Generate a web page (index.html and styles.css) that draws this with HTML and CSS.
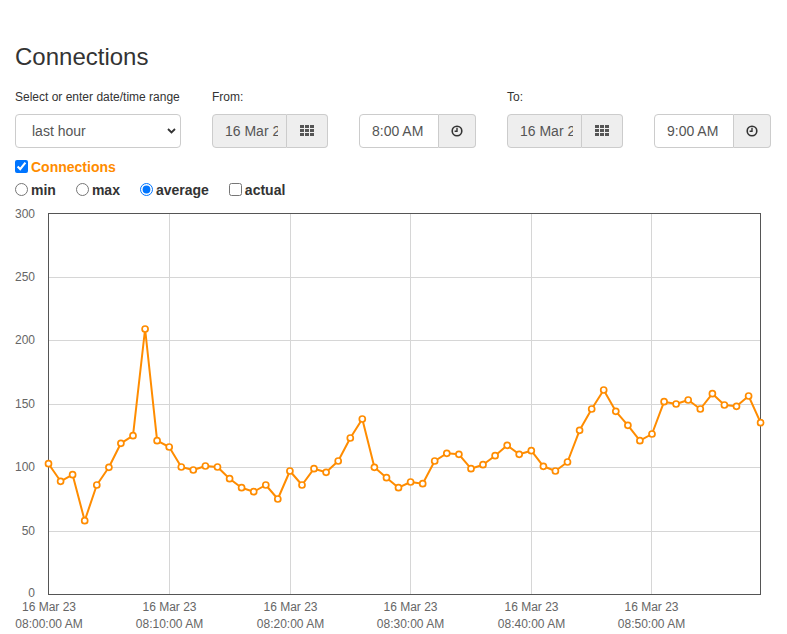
FILE: index.html
```html
<!DOCTYPE html>
<html lang="en">
<head>
<meta charset="utf-8">
<title>Connections</title>
<link rel="stylesheet" href="styles.css">
</head>
<body>
<div class="page">
  <h1 class="title">Connections</h1>
  <div class="range-row">
    <div class="field w-range">
      <label class="field-label">Select or enter date/time range</label>
      <div class="select-wrap">
        <select class="select">
          <option>last hour</option>
          <option>last day</option>
          <option>last week</option>
        </select>
        <svg class="chevron" width="9" height="6" viewBox="0 0 9 6"><path d="M1 1 L4.5 4.5 L8 1" fill="none" stroke="#333" stroke-width="1.8"/></svg>
      </div>
    </div>
    <div class="field w-date">
      <label class="field-label">From:</label>
      <div class="igroup">
        <input class="ctl ctl-date" type="text" value="16 Mar 2023" readonly>
        <span class="addon addon-date">
          <svg width="14" height="11" viewBox="0 0 14 11" fill="#555"><rect x="0" y="0" width="4" height="3"/><rect x="5" y="0" width="4" height="3"/><rect x="10" y="0" width="4" height="3"/><rect x="0" y="4" width="4" height="3"/><rect x="5" y="4" width="4" height="3"/><rect x="10" y="4" width="4" height="3"/><rect x="0" y="8" width="4" height="3"/><rect x="5" y="8" width="4" height="3"/><rect x="10" y="8" width="4" height="3"/></svg>
        </span>
      </div>
    </div>
    <div class="field w-time">
      <label class="field-label">&nbsp;</label>
      <div class="igroup">
        <input class="ctl ctl-time" type="text" value="8:00 AM">
        <span class="addon addon-time">
          <svg width="12" height="12" viewBox="0 0 12 12"><circle cx="6" cy="6" r="4.8" fill="none" stroke="#333" stroke-width="1.6"/><path d="M6 2.8 V6.3 H3.6" fill="none" stroke="#333" stroke-width="1.4"/></svg>
        </span>
      </div>
    </div>
    <div class="field w-date">
      <label class="field-label">To:</label>
      <div class="igroup">
        <input class="ctl ctl-date" type="text" value="16 Mar 2023" readonly>
        <span class="addon addon-date">
          <svg width="14" height="11" viewBox="0 0 14 11" fill="#555"><rect x="0" y="0" width="4" height="3"/><rect x="5" y="0" width="4" height="3"/><rect x="10" y="0" width="4" height="3"/><rect x="0" y="4" width="4" height="3"/><rect x="5" y="4" width="4" height="3"/><rect x="10" y="4" width="4" height="3"/><rect x="0" y="8" width="4" height="3"/><rect x="5" y="8" width="4" height="3"/><rect x="10" y="8" width="4" height="3"/></svg>
        </span>
      </div>
    </div>
    <div class="field w-time">
      <label class="field-label">&nbsp;</label>
      <div class="igroup">
        <input class="ctl ctl-time" type="text" value="9:00 AM">
        <span class="addon addon-time">
          <svg width="12" height="12" viewBox="0 0 12 12"><circle cx="6" cy="6" r="4.8" fill="none" stroke="#333" stroke-width="1.6"/><path d="M6 2.8 V6.3 H3.6" fill="none" stroke="#333" stroke-width="1.4"/></svg>
        </span>
      </div>
    </div>
  </div>

  <div class="series-row">
    <label class="opt series"><input class="box" type="checkbox" checked>Connections</label>
  </div>
  <div class="mode-row">
    <label class="opt"><input class="box" type="radio" name="mode">min</label>
    <label class="opt"><input class="box" type="radio" name="mode">max</label>
    <label class="opt"><input class="box" type="radio" name="mode" checked>average</label>
    <label class="opt"><input class="box" type="checkbox">actual</label>
  </div>
</div>

<svg class="chart" width="787" height="432" viewBox="0 200 787 432">
  <g class="grid">
    <line x1="48.5" y1="277.5" x2="760.5" y2="277.5"/>
    <line x1="48.5" y1="340.5" x2="760.5" y2="340.5"/>
    <line x1="48.5" y1="404.5" x2="760.5" y2="404.5"/>
    <line x1="48.5" y1="467.5" x2="760.5" y2="467.5"/>
    <line x1="48.5" y1="531.5" x2="760.5" y2="531.5"/>
    <line x1="169.5" y1="213.5" x2="169.5" y2="594.5"/>
    <line x1="290.5" y1="213.5" x2="290.5" y2="594.5"/>
    <line x1="410.5" y1="213.5" x2="410.5" y2="594.5"/>
    <line x1="531.5" y1="213.5" x2="531.5" y2="594.5"/>
    <line x1="651.5" y1="213.5" x2="651.5" y2="594.5"/>
  </g>
  <rect class="frame" x="48.5" y="213.5" width="712" height="381"/>
  <g class="ylab">
    <text x="35" y="217.5">300</text>
    <text x="35" y="280.5">250</text>
    <text x="35" y="344">200</text>
    <text x="35" y="407.5">150</text>
    <text x="35" y="471">100</text>
    <text x="35" y="534.5">50</text>
    <text x="35" y="597">0</text>
  </g>
  <g class="xlab">
    <text x="49" y="611">16 Mar 23</text><text x="49" y="628">08:00:00 AM</text>
    <text x="169.5" y="611">16 Mar 23</text><text x="169.5" y="628">08:10:00 AM</text>
    <text x="290.5" y="611">16 Mar 23</text><text x="290.5" y="628">08:20:00 AM</text>
    <text x="410.5" y="611">16 Mar 23</text><text x="410.5" y="628">08:30:00 AM</text>
    <text x="531.5" y="611">16 Mar 23</text><text x="531.5" y="628">08:40:00 AM</text>
    <text x="651.5" y="611">16 Mar 23</text><text x="651.5" y="628">08:50:00 AM</text>
  </g>
  <polyline class="series-line" points="48.5,463.7 60.6,481.3 72.6,474.7 84.7,520.7 96.8,485 108.9,467.3 120.9,443.3 133,435.7 145.1,329 157.1,440.7 169.2,447 181.3,467 193.3,470 205.4,466 217.5,467 229.6,478.7 241.6,487.7 253.7,491.7 265.8,485 277.8,499 289.9,471 302,485 314,468.7 326.1,472.3 338.2,461 350.3,438 362.3,419 374.4,467.3 386.5,477.7 398.5,487.7 410.6,482 422.7,483.7 434.7,461 446.8,453.3 458.9,454.3 471,468.7 483,464.7 495.1,455.7 507.2,445.3 519.2,454.3 531.3,450.7 543.4,466.3 555.4,471 567.5,462 579.6,430.3 591.7,409 603.7,390 615.8,411.3 627.9,425.3 639.9,440.7 652,434 664.1,401.7 676.1,404 688.2,400 700.3,409 712.4,393.7 724.4,405 736.5,406.3 748.6,396 760.6,422.7"/>
  <g class="dots">
    <circle cx="48.5" cy="463.7" r="3"/><circle cx="60.6" cy="481.3" r="3"/><circle cx="72.6" cy="474.7" r="3"/><circle cx="84.7" cy="520.7" r="3"/><circle cx="96.8" cy="485" r="3"/><circle cx="108.9" cy="467.3" r="3"/><circle cx="120.9" cy="443.3" r="3"/><circle cx="133" cy="435.7" r="3"/><circle cx="145.1" cy="329" r="3"/><circle cx="157.1" cy="440.7" r="3"/>
    <circle cx="169.2" cy="447" r="3"/><circle cx="181.3" cy="467" r="3"/><circle cx="193.3" cy="470" r="3"/><circle cx="205.4" cy="466" r="3"/><circle cx="217.5" cy="467" r="3"/><circle cx="229.6" cy="478.7" r="3"/><circle cx="241.6" cy="487.7" r="3"/><circle cx="253.7" cy="491.7" r="3"/><circle cx="265.8" cy="485" r="3"/><circle cx="277.8" cy="499" r="3"/>
    <circle cx="289.9" cy="471" r="3"/><circle cx="302" cy="485" r="3"/><circle cx="314" cy="468.7" r="3"/><circle cx="326.1" cy="472.3" r="3"/><circle cx="338.2" cy="461" r="3"/><circle cx="350.3" cy="438" r="3"/><circle cx="362.3" cy="419" r="3"/><circle cx="374.4" cy="467.3" r="3"/><circle cx="386.5" cy="477.7" r="3"/><circle cx="398.5" cy="487.7" r="3"/>
    <circle cx="410.6" cy="482" r="3"/><circle cx="422.7" cy="483.7" r="3"/><circle cx="434.7" cy="461" r="3"/><circle cx="446.8" cy="453.3" r="3"/><circle cx="458.9" cy="454.3" r="3"/><circle cx="471" cy="468.7" r="3"/><circle cx="483" cy="464.7" r="3"/><circle cx="495.1" cy="455.7" r="3"/><circle cx="507.2" cy="445.3" r="3"/><circle cx="519.2" cy="454.3" r="3"/>
    <circle cx="531.3" cy="450.7" r="3"/><circle cx="543.4" cy="466.3" r="3"/><circle cx="555.4" cy="471" r="3"/><circle cx="567.5" cy="462" r="3"/><circle cx="579.6" cy="430.3" r="3"/><circle cx="591.7" cy="409" r="3"/><circle cx="603.7" cy="390" r="3"/><circle cx="615.8" cy="411.3" r="3"/><circle cx="627.9" cy="425.3" r="3"/><circle cx="639.9" cy="440.7" r="3"/>
    <circle cx="652" cy="434" r="3"/><circle cx="664.1" cy="401.7" r="3"/><circle cx="676.1" cy="404" r="3"/><circle cx="688.2" cy="400" r="3"/><circle cx="700.3" cy="409" r="3"/><circle cx="712.4" cy="393.7" r="3"/><circle cx="724.4" cy="405" r="3"/><circle cx="736.5" cy="406.3" r="3"/><circle cx="748.6" cy="396" r="3"/><circle cx="760.6" cy="422.7" r="3"/>
  </g>
</svg>
</body>
</html>
```
FILE: styles.css
```css
html, body {
  margin: 0;
  padding: 0;
  background: #fff;
}
body {
  font-family: "Liberation Sans", Arial, sans-serif;
  color: #333;
  overflow: hidden;
}
.page {
  padding: 0 15px;
}
.title {
  margin: 43px 0 18px;
  font-size: 24px;
  line-height: 28px;
  font-weight: normal;
  color: #333;
}
.range-row {
  display: flex;
  gap: 31px;
}
.field {
  display: flex;
  flex-direction: column;
}
.w-range { width: 166px; }
.w-date { width: 116px; }
.w-time { width: 117px; }
.field-label {
  display: block;
  font-size: 12px;
  line-height: 17px;
  margin-bottom: 8px;
  color: #333;
}
.select-wrap {
  position: relative;
  height: 34px;
}
.select {
  appearance: none;
  -webkit-appearance: none;
  box-sizing: border-box;
  width: 166px;
  height: 34px;
  margin: 0;
  padding: 0 24px 0 16px;
  border: 1px solid #ccc;
  border-radius: 4px;
  background: #fff;
  font-family: "Liberation Sans", Arial, sans-serif;
  font-size: 14px;
  color: #555;
}
.chevron {
  position: absolute;
  right: 5px;
  top: 14px;
  pointer-events: none;
}
.igroup {
  display: flex;
  height: 34px;
}
.ctl {
  box-sizing: border-box;
  height: 34px;
  margin: 0;
  padding: 6px 8px 6px 12px;
  border: 1px solid #ccc;
  border-radius: 4px 0 0 4px;
  font-family: "Liberation Sans", Arial, sans-serif;
  font-size: 14px;
  color: #555;
  outline: none;
}
.ctl-date {
  width: 75px;
  background: #eee;
}
.ctl-time {
  width: 80px;
  background: #fff;
}
.addon {
  box-sizing: border-box;
  display: flex;
  align-items: center;
  justify-content: center;
  height: 34px;
  border: 1px solid #ccc;
  border-left: 0;
  border-radius: 0 4px 4px 0;
  background: #eee;
}
.addon-date {
  width: 41px;
  padding-bottom: 2px;
}
.addon-time {
  width: 37px;
  padding-bottom: 1px;
}
.series-row {
  margin-top: 9px;
  display: flex;
  height: 20px;
}
.mode-row {
  margin-top: 3px;
  display: flex;
  height: 20px;
  gap: 20px;
}
.opt {
  display: flex;
  align-items: center;
  font-size: 14px;
  line-height: 20px;
  font-weight: bold;
  color: #333;
}
.series {
  color: #ff8c00;
}
.box {
  width: 13px;
  height: 13px;
  margin: -2px 3px 0 0;
}
.chart {
  display: block;
}
.grid line {
  stroke: #d6d6d6;
  stroke-width: 1;
}
.frame {
  fill: none;
  stroke: #555;
  stroke-width: 1;
}
.ylab text {
  font-family: "Liberation Sans", Arial, sans-serif;
  font-size: 12px;
  fill: #666;
  text-anchor: end;
}
.xlab text {
  font-family: "Liberation Sans", Arial, sans-serif;
  font-size: 12px;
  fill: #666;
  text-anchor: middle;
}
.series-line {
  fill: none;
  stroke: #ff8c00;
  stroke-width: 2;
  stroke-linejoin: round;
}
.dots circle {
  fill: #fff;
  stroke: #ff8c00;
  stroke-width: 1.7;
}
```
